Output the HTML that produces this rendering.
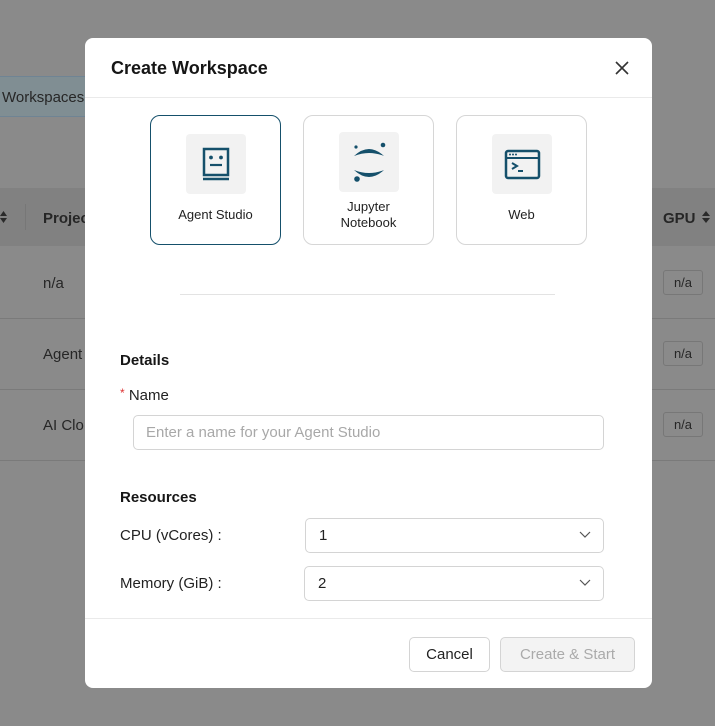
<!DOCTYPE html>
<html><head><meta charset="utf-8"><style>
*{box-sizing:border-box;margin:0;padding:0}
body{width:715px;height:726px;position:relative;overflow:hidden;background:#8a8a8a;font-family:"Liberation Sans",sans-serif;color:#222}
.abs{position:absolute}
.bgt{color:#262626;font-size:15px}
.modal{position:absolute;left:85px;top:38px;width:567px;height:650px;background:#fff;border-radius:8px}
.card{position:absolute;top:77px;width:131px;height:130px;border:1px solid #d6d6d6;border-radius:10px;text-align:center;font-size:13px;color:#222}
.card .ic{position:absolute;left:35px;top:18px;width:60px;height:60px;background:#f2f2f2;border-radius:4px}
.card .lb{position:absolute;left:0;right:0;line-height:16px}
.inp{position:absolute;border:1px solid #d4d4d4;border-radius:5px;background:#fff;font-size:15px}
.sel .v{position:absolute;left:13px;top:8px;color:#222}
.sel svg{position:absolute;right:12px;top:12px}
.btn{position:absolute;top:599px;height:35px;border:1px solid #d4d4d4;border-radius:5px;font-size:15px;text-align:center;line-height:33px}
</style></head><body>
<div class="abs" style="left:0;top:76px;width:87px;height:41px;background:#808e93;border:1px solid #6f8494;border-left:none"></div>
<div class="abs bgt" style="left:2px;top:89px;">Workspaces</div>
<div class="abs" style="left:0;top:188px;width:715px;height:58px;background:#818181"></div>
<div class="abs" style="left:25px;top:204px;width:1px;height:26px;background:#777"></div>
<div class="abs bgt" style="left:43px;top:210px;font-weight:bold">Projec</div>
<svg class="abs" style="left:0;top:210px" width="7" height="14" viewBox="0 0 7 14"><path d="M0 6L3.5 1L7 6ZM0 8L3.5 13L7 8Z" fill="#2a2a2a"/></svg>
<div class="abs bgt" style="left:663px;top:210px;font-weight:bold">GPU</div>
<svg class="abs" style="left:702px;top:210px" width="8" height="14" viewBox="0 0 8 14"><path d="M0 6L4 1L8 6ZM0 8L4 13L8 8Z" fill="#2a2a2a"/></svg>
<div class="abs" style="left:0;top:318px;width:715px;height:1px;background:#7a7a7a"></div>
<div class="abs" style="left:0;top:389px;width:715px;height:1px;background:#7a7a7a"></div>
<div class="abs" style="left:0;top:460px;width:715px;height:1px;background:#7a7a7a"></div>
<div class="abs bgt" style="left:43px;top:275px">n/a</div>
<div class="abs bgt" style="left:43px;top:346px">Agent</div>
<div class="abs bgt" style="left:43px;top:417px">AI Clo</div>
<div class="abs bgt" style="left:663px;top:270px;width:40px;height:25px;border:1px solid #777;border-radius:3px;font-size:13px;text-align:center;line-height:23px">n/a</div>
<div class="abs bgt" style="left:663px;top:341px;width:40px;height:25px;border:1px solid #777;border-radius:3px;font-size:13px;text-align:center;line-height:23px">n/a</div>
<div class="abs bgt" style="left:663px;top:412px;width:40px;height:25px;border:1px solid #777;border-radius:3px;font-size:13px;text-align:center;line-height:23px">n/a</div>

<div class="modal">
<div class="abs" style="left:26px;top:20px;font-size:18px;font-weight:bold;color:#161616">Create Workspace</div>
<svg class="abs" style="left:529px;top:22px" width="16" height="16" viewBox="0 0 16 16"><path d="M2 2L14 14M14 2L2 14" stroke="#333" stroke-width="1.6"/></svg>
<div class="abs" style="left:0;top:59px;width:567px;height:1px;background:#eaeaea"></div>

<div class="card" style="left:65px;border-color:#15506b">
<div class="ic"><svg width="60" height="60" viewBox="0 0 60 60"><rect x="18" y="15" width="24" height="26" fill="none" stroke="#15506b" stroke-width="2.5"/><circle cx="25" cy="23.5" r="1.9" fill="#15506b"/><circle cx="35" cy="23.5" r="1.9" fill="#15506b"/><path d="M24 31H36" stroke="#15506b" stroke-width="2.2"/><path d="M17 45H43" stroke="#15506b" stroke-width="2.5"/></svg></div>
<div class="lb" style="top:91px">Agent Studio</div></div>
<div class="card" style="left:218px">
<div class="ic" style="top:16px"><svg width="60" height="60" viewBox="0 0 60 60"><path d="M15 24Q30 10 45 24Q30 18 15 24Z" fill="#15506b"/><path d="M15 38Q30 52 45 38Q30 44 15 38Z" fill="#15506b"/><circle cx="17" cy="15" r="1.6" fill="#15506b"/><circle cx="44" cy="13" r="2.3" fill="#15506b"/><circle cx="18" cy="47" r="2.8" fill="#15506b"/></svg></div>
<div class="lb" style="top:83px">Jupyter<br>Notebook</div></div>
<div class="card" style="left:371px">
<div class="ic"><svg width="60" height="60" viewBox="0 0 60 60"><rect x="14" y="17" width="33" height="27" rx="2" fill="none" stroke="#15506b" stroke-width="2.5"/><path d="M14 24H47" stroke="#15506b" stroke-width="2"/><circle cx="18" cy="20.5" r="1" fill="#15506b"/><circle cx="21" cy="20.5" r="1" fill="#15506b"/><circle cx="24" cy="20.5" r="1" fill="#15506b"/><path d="M20 29L25 32L20 35" fill="none" stroke="#15506b" stroke-width="2"/><path d="M26 37H31" stroke="#15506b" stroke-width="2"/></svg></div>
<div class="lb" style="top:91px">Web</div></div>

<div class="abs" style="left:95px;top:256px;width:375px;height:1px;background:#e3e3e3"></div>
<div class="abs" style="left:35px;top:314px;font-size:15px;font-weight:bold;color:#161616">Details</div>
<div class="abs" style="left:35px;top:348px;font-size:15px;color:#222"><span style="color:#d33;font-size:12px;vertical-align:3px">*</span> Name</div>
<div class="inp" style="left:48px;top:377px;width:471px;height:35px"><span style="position:absolute;left:12px;top:8px;color:#a8a8a8">Enter a name for your Agent Studio</span></div>
<div class="abs" style="left:35px;top:451px;font-size:15px;font-weight:bold;color:#161616">Resources</div>
<div class="abs" style="left:35px;top:489px;font-size:15px">CPU (vCores)&nbsp;:</div>
<div class="abs" style="left:35px;top:537px;font-size:15px">Memory (GiB)&nbsp;:</div>
<div class="inp sel" style="left:220px;top:480px;width:299px;height:35px"><span class="v">1</span><svg width="12" height="8" viewBox="0 0 12 8"><path d="M1 1L6 6L11 1" fill="none" stroke="#555" stroke-width="1.2"/></svg></div>
<div class="inp sel" style="left:219px;top:528px;width:300px;height:35px"><span class="v">2</span><svg width="12" height="8" viewBox="0 0 12 8"><path d="M1 1L6 6L11 1" fill="none" stroke="#555" stroke-width="1.2"/></svg></div>
<div class="abs" style="left:0;top:580px;width:567px;height:1px;background:#eaeaea"></div>
<div class="btn" style="left:324px;width:81px;color:#222;background:#fff">Cancel</div>
<div class="btn" style="left:415px;width:135px;color:#aaa;background:#f3f3f3">Create &amp; Start</div>
</div>
</body></html>
